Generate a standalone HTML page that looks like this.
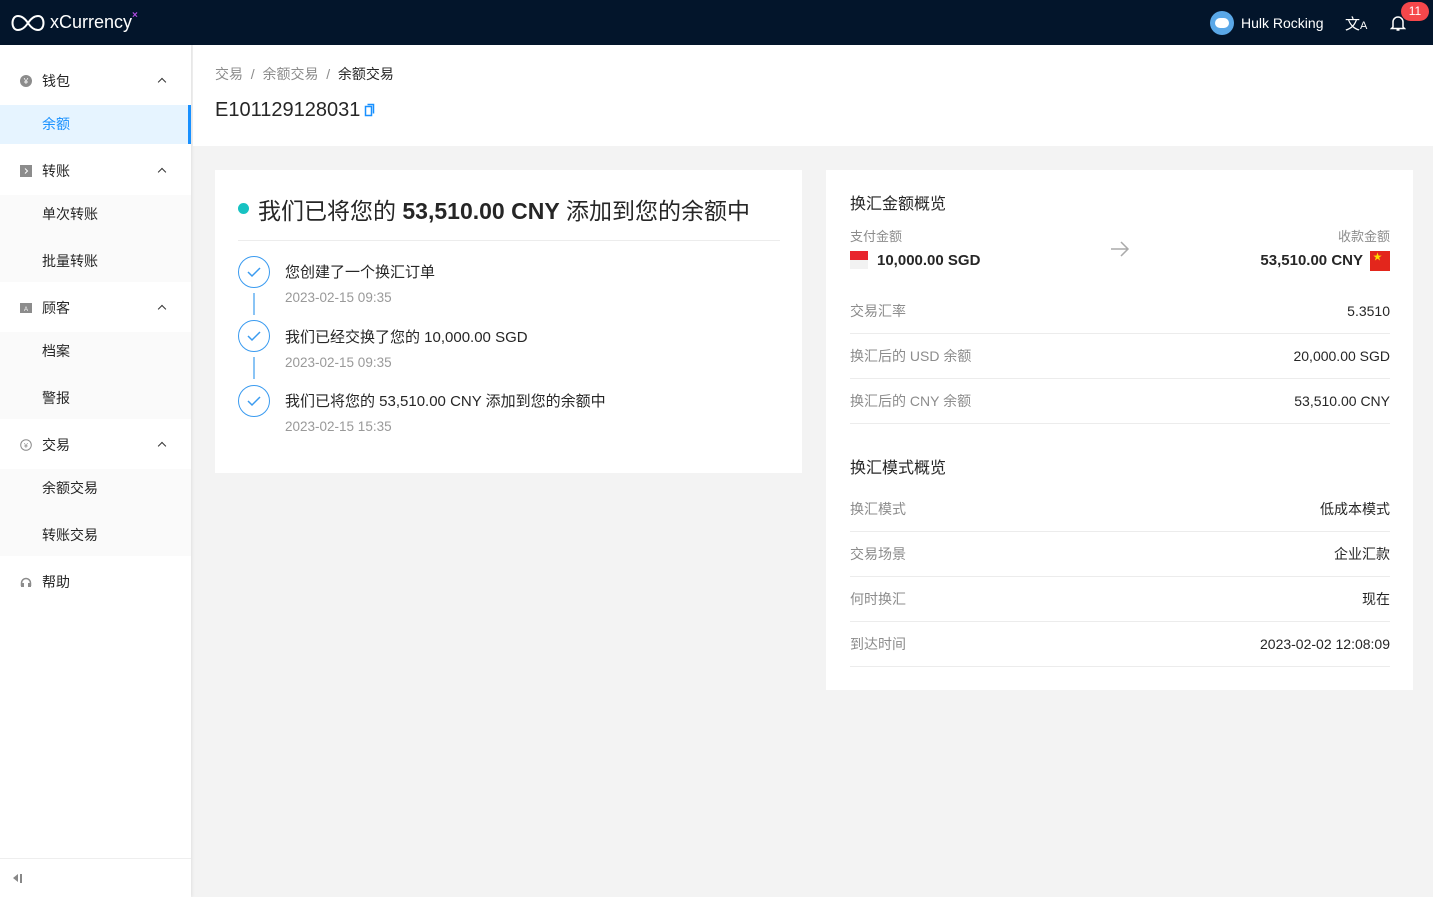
<!DOCTYPE html>
<html><head><meta charset="utf-8"><style>
*{margin:0;padding:0;box-sizing:border-box}
body{width:1433px;height:897px;overflow:hidden;background:#f3f3f3;font-family:"Liberation Sans","Noto Sans CJK SC",sans-serif;color:#262626;position:relative}
.top{position:absolute;left:0;top:0;width:1433px;height:45px;background:#03152b}
.side{position:absolute;left:0;top:45px;width:191px;height:852px;background:#fff;box-shadow:1px 0 3px rgba(0,0,0,.08)}
.it{position:absolute;left:0;width:191px;height:20px;line-height:20px;font-size:14px;color:#262626}
.it span{position:absolute;left:42px}
.it .ic{position:absolute;left:20px;top:4px;width:12px;height:12px}
.it .car{position:absolute;left:159px;top:8px;width:6px;height:6px;border-left:1.5px solid #333;border-top:1.5px solid #333;transform:rotate(45deg)}
.bg{position:absolute;left:0;width:191px;background:#fafafa}
.main{position:absolute;left:193px;top:45px;width:1240px;height:101px;background:#fff}
.card{position:absolute;background:#fff}
.row{display:flex;justify-content:space-between;height:45px;align-items:center;border-bottom:1px solid #ececec;font-size:14px}
.row .l{color:#8c8c8c}
.circ{position:absolute;width:32px;height:32px;border:1.5px solid #3a9bf0;border-radius:50%}
</style></head><body>
<div class="top">
<svg style="position:absolute;left:11px;top:14px" width="34" height="18" viewBox="0 0 34 18"><path d="M17 9C13 3 9 2 7 2 3.5 2 1.5 5 1.5 9s2 7 5.5 7c2 0 6-1 10-7s8-7 10-7c3.5 0 5.5 3 5.5 7s-2 7-5.5 7c-2 0-6-1-10-7z" fill="none" stroke="#fff" stroke-width="2"/></svg>
<div style="position:absolute;left:50px;top:12px;color:#fff;font-size:18px">xCurrency</div>
<div style="position:absolute;left:132px;top:10px;color:#b04be0;font-size:10px;font-weight:bold">×</div>
<div style="position:absolute;left:1210px;top:11px;width:24px;height:24px;border-radius:50%;background:#5aa8e8"><div style="margin:7px 5px;width:14px;height:10px;border-radius:5px;background:#fff"></div></div>
<div style="position:absolute;left:1241px;top:15px;color:#fff;font-size:14px">Hulk Rocking</div>
<div style="position:absolute;left:1345px;top:13px;color:#fff;font-size:15px">文<span style="font-size:11px">A</span></div>
<svg style="position:absolute;left:1390px;top:14px" width="16" height="18" viewBox="0 0 16 18"><path d="M3 13V8a5 5 0 0110 0v5l1.5 1.5h-13z M6.5 16h3" fill="none" stroke="#fff" stroke-width="1.5"/></svg>
<div style="position:absolute;left:1401px;top:2px;width:28px;height:19px;border-radius:10px;background:#f5474b;color:#fff;font-size:12px;text-align:center;line-height:19px">11</div>
</div>
<div class="side">
<div style="position:absolute;left:0;top:60px;width:191px;height:39px;background:#e6f4ff;border-right:3px solid #1890ff"></div>
<div class="bg" style="top:150px;height:87px"></div>
<div class="bg" style="top:287px;height:87px"></div>
<div class="bg" style="top:424px;height:87px"></div>
<div class="it" style="top:26px"><svg class="ic" viewBox="0 0 12 12"><circle cx="6" cy="6" r="6" fill="#8c8c8c"/><text x="6" y="9" font-size="8" fill="#fff" text-anchor="middle">¥</text></svg><span>钱包</span><i class="car"></i></div>
<div class="it" style="top:69px;color:#1890ff"><span>余额</span></div>
<div class="it" style="top:116px"><svg class="ic" viewBox="0 0 12 12"><rect width="12" height="12" fill="#8c8c8c"/><path d="M5 3.5l2.5 2.5L5 8.5" stroke="#fff" fill="none"/></svg><span>转账</span><i class="car"></i></div>
<div class="it" style="top:159px"><span>单次转账</span></div>
<div class="it" style="top:206px"><span>批量转账</span></div>
<div class="it" style="top:253px"><svg class="ic" viewBox="0 0 12 12"><rect y="1" width="12" height="10" fill="#8c8c8c"/><text x="6" y="9" font-size="6" fill="#fff" text-anchor="middle">A</text></svg><span>顾客</span><i class="car"></i></div>
<div class="it" style="top:296px"><span>档案</span></div>
<div class="it" style="top:343px"><span>警报</span></div>
<div class="it" style="top:390px"><svg class="ic" viewBox="0 0 12 12"><circle cx="6" cy="6" r="5.3" fill="none" stroke="#8c8c8c"/><text x="6" y="9" font-size="7" fill="#8c8c8c" text-anchor="middle">¥</text></svg><span>交易</span><i class="car"></i></div>
<div class="it" style="top:433px"><span>余额交易</span></div>
<div class="it" style="top:480px"><span>转账交易</span></div>
<div class="it" style="top:527px"><svg class="ic" viewBox="0 0 12 12"><path d="M1.5 10V7a4.5 4.5 0 019 0v3" fill="none" stroke="#8c8c8c" stroke-width="1.5"/><rect x="1" y="7" width="3" height="4" fill="#8c8c8c"/><rect x="8" y="7" width="3" height="4" fill="#8c8c8c"/></svg><span>帮助</span></div>
<div style="position:absolute;left:0;top:813px;width:191px;border-top:1px solid #eee"></div>
<div style="position:absolute;left:13px;top:829px;width:0;height:0;border-right:5px solid #888;border-top:4px solid transparent;border-bottom:4px solid transparent"></div>
<div style="position:absolute;left:20px;top:829px;width:1.5px;height:9px;background:#888"></div>
</div>
<div class="main">
<div style="position:absolute;left:22px;top:19px;font-size:14px;color:#8c8c8c">交易 &nbsp;/&nbsp; 余额交易 &nbsp;/&nbsp; <span style="color:#262626">余额交易</span></div>
<div style="position:absolute;left:22px;top:54px;font-size:20px;color:#262626">E101129128031</div>
<svg style="position:absolute;left:171px;top:58px" width="12" height="14" viewBox="0 0 12 14"><path d="M3.5 1.5h6v9M1.5 3.5h6v9h-6z" fill="none" stroke="#1890ff" stroke-width="1.5"/></svg>
</div>
<div class="card" style="left:215px;top:170px;width:587px;height:303px">
<div style="position:absolute;left:23px;top:33px;width:11px;height:11px;border-radius:50%;background:#17c2c2"></div>
<div style="position:absolute;left:43px;top:22px;font-size:23px">我们已将您的 <b style="font-weight:bold">53,510.00 CNY</b> 添加到您的余额中</div>
<div style="position:absolute;left:23px;top:70px;width:542px;border-top:1px solid #ececec"></div>
<div class="circ" style="left:23px;top:86px"></div><svg style="position:absolute;left:31px;top:96px" width="16" height="12"><path d="M2 6l4 4 8-8" stroke="#3a9bf0" stroke-width="1.5" fill="none"/></svg>
<div style="position:absolute;left:38px;top:123px;width:2px;height:22px;background:#8ac4f5"></div>
<div class="circ" style="left:23px;top:150px"></div><svg style="position:absolute;left:31px;top:160px" width="16" height="12"><path d="M2 6l4 4 8-8" stroke="#3a9bf0" stroke-width="1.5" fill="none"/></svg>
<div style="position:absolute;left:38px;top:187px;width:2px;height:22px;background:#8ac4f5"></div>
<div class="circ" style="left:23px;top:215px"></div><svg style="position:absolute;left:31px;top:225px" width="16" height="12"><path d="M2 6l4 4 8-8" stroke="#3a9bf0" stroke-width="1.5" fill="none"/></svg>
<div style="position:absolute;left:70px;top:91px;font-size:15px">您创建了一个换汇订单</div>
<div style="position:absolute;left:70px;top:120px;font-size:13.5px;color:#999">2023-02-15 09:35</div>
<div style="position:absolute;left:70px;top:156px;font-size:15px">我们已经交换了您的 10,000.00 SGD</div>
<div style="position:absolute;left:70px;top:185px;font-size:13.5px;color:#999">2023-02-15 09:35</div>
<div style="position:absolute;left:70px;top:220px;font-size:15px">我们已将您的 53,510.00 CNY 添加到您的余额中</div>
<div style="position:absolute;left:70px;top:249px;font-size:13.5px;color:#999">2023-02-15 15:35</div>
</div>
<div class="card" style="left:826px;top:170px;width:587px;height:520px;padding:0 23px">
<div style="position:absolute;left:24px;top:20px;font-size:16px">换汇金额概览</div>
<div style="position:absolute;left:24px;top:56px;font-size:13px;color:#8c8c8c">支付金额</div>
<div style="position:absolute;right:23px;top:56px;font-size:13px;color:#8c8c8c">收款金额</div>
<div style="position:absolute;left:24px;top:81px;width:18px;height:19px"><div style="height:9px;background:#e8252e"></div><div style="height:9px;background:#f2f2f2"></div></div>
<div style="position:absolute;left:51px;top:82px;font-size:15px;font-weight:bold">10,000.00 SGD</div>
<svg style="position:absolute;left:284px;top:70px" width="20" height="18"><path d="M1 9h17M11 2l7 7-7 7" stroke="#aaa" stroke-width="1.5" fill="none"/></svg>
<div style="position:absolute;right:50px;top:82px;font-size:15px;font-weight:bold">53,510.00 CNY</div>
<div style="position:absolute;right:23px;top:81px;width:20px;height:20px;background:#e3261c;color:#ffde00;font-size:9px;line-height:12px;padding-left:3px">★</div>
<div style="position:absolute;left:24px;right:23px;top:119px">
<div class="row"><span class="l">交易汇率</span><span>5.3510</span></div>
<div class="row"><span class="l">换汇后的 USD 余额</span><span>20,000.00 SGD</span></div>
<div class="row"><span class="l">换汇后的 CNY 余额</span><span>53,510.00 CNY</span></div>
</div>
<div style="position:absolute;left:24px;top:284px;font-size:16px">换汇模式概览</div>
<div style="position:absolute;left:24px;right:23px;top:317px">
<div class="row"><span class="l">换汇模式</span><span>低成本模式</span></div>
<div class="row"><span class="l">交易场景</span><span>企业汇款</span></div>
<div class="row"><span class="l">何时换汇</span><span>现在</span></div>
<div class="row"><span class="l">到达时间</span><span>2023-02-02 12:08:09</span></div>
</div>
</div>
</body></html>
